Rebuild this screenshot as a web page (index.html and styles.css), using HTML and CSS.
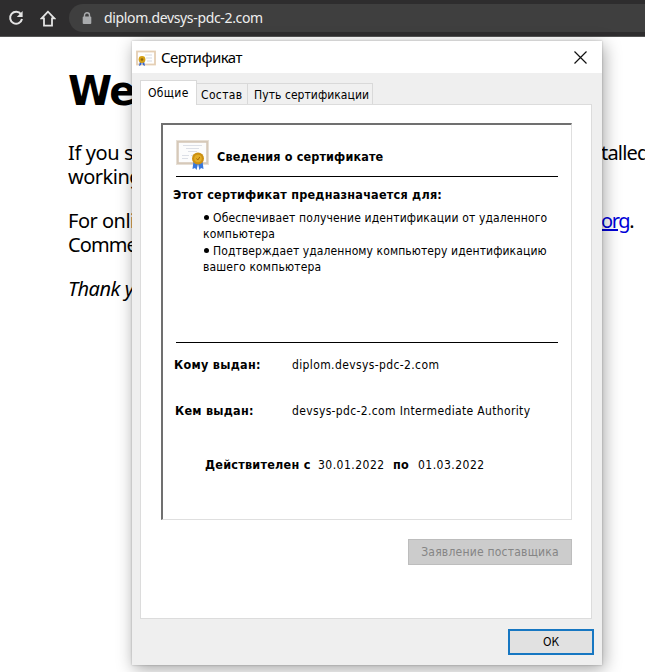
FILE: index.html
```html
<!DOCTYPE html>
<html lang="ru">
<head>
<meta charset="utf-8">
<title>diplom.devsys-pdc-2.com</title>
<link rel="stylesheet" href="styles.css">
</head>
<body>
<header class="toolbar">
  <svg class="nav-icon reload" viewBox="0 0 16 16"><path d="M13 4.2A6 6 0 1 0 14 9" fill="none" stroke="#e4e4e4" stroke-width="2"/><path d="M14.6 1v6H8.8z" fill="#e4e4e4"/></svg>
  <svg class="nav-icon home" viewBox="0 0 16 17"><path d="M8 1.7 1.6 8.4H4V15.6H12V8.4h2.4z" fill="none" stroke="#e4e4e4" stroke-width="1.8"/></svg>
  <div class="omnibox">
    <svg class="lock" viewBox="0 0 10 13"><path d="M2.5 5V3.3a2.5 2.5 0 0 1 5 0V5" fill="none" stroke="#a9abad" stroke-width="1.4"/><rect x="0.7" y="4.6" width="8.6" height="7.4" rx="1" fill="#a9abad"/></svg>
    <span class="url">diplom.devsys-pdc-2.com</span>
  </div>
</header>
<main class="page">
  <div class="left">
    <h1>We</h1>
    <p><span class="line first">If you s</span><span class="line">working</span></p>
    <p><span class="line">For onli</span><span class="line comm">Comme</span></p>
    <p><em>Thank y</em></p>
  </div>
  <div class="right">
    <p>talled</p>
    <p><a>org</a>.</p>
  </div>
</main>
<section class="dialog">
  <div class="titlebar">
    <svg class="cert-small" viewBox="0 0 20 17"><rect x="1" y="1.5" width="18" height="13" fill="#fff" stroke="#e5cfb4" stroke-width="1.8"/><path d="M9 5h7M10 8h6M11 11h5" stroke="#e3e6ed" stroke-width="1.4"/><path d="m4 11-1 5 2-1 1-3 1 3 2 1-1-5z" fill="#3565cf"/><circle cx="6" cy="9.5" r="3.4" fill="#d5a014"/><circle cx="6" cy="9.5" r="1.3" fill="#8c6510"/></svg>
    <span class="title">Сертификат</span>
    <svg class="close" viewBox="0 0 13 13"><path d="M.5 .5l12 12M12.5 .5l-12 12" stroke="#111" stroke-width="1.2"/></svg>
  </div>
  <nav class="tabs"><span class="tab active">Общие</span><span class="tab details">Состав</span><span class="tab path">Путь сертификации</span></nav>
  <div class="panel">
    <div class="info">
      <div class="heading">
        <svg class="cert" viewBox="0 0 33 31"><rect x="1.5" y="2.5" width="30" height="22" fill="#fcfcfc" stroke="#d6c9b9" stroke-width="2.6"/><rect x=".5" y="1.5" width="32" height="24" fill="none" stroke="#e7dfd5"/><path d="M7 6.5h19M10 9.5h13M12 12.5h9M6 16.5h7M6 19.5h6M15 16.5h3" stroke="#dcdfe6"/><path d="m17.5 22-1 8 2.5-1 1.500 2 1.500-6 1.500 6 1.500-2 2.500 1-1-8z" fill="#3978dc"/><circle cx="22" cy="19.500" r="6" fill="#cc9012"/><circle cx="22" cy="19.500" r="3.800" fill="#e3ad27"/><path d="m20.500 19.500 1.300 1.500 2-3" fill="none" stroke="#a86b08"/></svg>
        <h2>Сведения о сертификате</h2>
      </div>
      <h3>Этот сертификат предназначается для:</h3>
      <div class="purposes">
        <div class="p1"><span class="bullet"></span>Обеспечивает получение идентификации от удаленного</div>
        <div class="p2">компьютера</div>
        <div class="p3"><span class="bullet"></span>Подтверждает удаленному компьютеру идентификацию</div>
        <div class="p4">вашего компьютера</div>
      </div>
      <dl class="issued">
        <dt class="to">Кому выдан:</dt><dd class="subject">diplom.devsys-pdc-2.com</dd>
        <dt class="by">Кем выдан:</dt><dd class="issuer">devsys-pdc-2.com Intermediate Authority</dd>
      </dl>
      <div class="validity"><strong class="from">Действителен с</strong><span>30.01.2022</span><strong class="until">по</strong><span>01.03.2022</span></div>
    </div>
    <button class="statement" disabled>Заявление поставщика</button>
  </div>
  <footer><button class="ok">ОК</button></footer>
</section>
</body>
</html>
```
FILE: styles.css
```css
* { box-sizing: border-box; }
body { margin: 0; width: 645px; height: 672px; overflow: hidden; position: relative; background: #fff; color: #000; font-family: "DejaVu Sans Condensed", "DejaVu Sans", sans-serif; font-size: 12px; }
h1, h2, h3, p, dl, dd { margin: 0; }
button { font: inherit; padding: 0; border-radius: 0; }

.toolbar { height: 37px; background: #2e2d2e; display: flex; align-items: flex-start; border-bottom: 1px solid #555; overflow: hidden; }
.nav-icon { flex: none; }
.reload { width: 16px; height: 16px; margin: 10px 0 0 8px; }
.home { width: 16px; height: 17px; margin: 10px 0 0 16px; }
.omnibox { margin: 4px 0 0 13px; flex: 1; height: 28px; border-radius: 14px 0 0 14px; background: #3f3f3f; display: flex; align-items: center; padding-left: 13px; }
.lock { width: 10px; height: 13px; }
.url { margin-left: 12px; color: #eee; font: 14px/20px "Noto Sans", sans-serif; white-space: nowrap; letter-spacing: -0.34px; }

.page { display: grid; grid-template-columns: 66px 43px; column-gap: 467px; padding: 29px 0 0 68px; font: 20px/24px "Noto Sans", sans-serif; white-space: nowrap; }
.page h1 { font: bold 40px/50px "DejaVu Sans", sans-serif; letter-spacing: -1.5px; margin-bottom: 25px; }
.page p { margin-bottom: 20px; letter-spacing: -0.5px; }
.line { display: block; }
.page .first { letter-spacing: -0.4px; }
.page .comm { letter-spacing: -0.9px; }
.page em { letter-spacing: -0.5px; }
.page a { color: #0000d8; text-decoration: underline; }
.right { padding-top: 75px; }
.right p { margin-bottom: 44px; letter-spacing: -0.8px; }
.right p + p { letter-spacing: -1.4px; }

.dialog { position: absolute; left: 132px; top: 41px; width: 470px; height: 624px; background: #efefef; box-shadow: 2px 4px 16px rgba(0,0,0,.36), 0 0 2px rgba(0,0,0,.25); white-space: nowrap; }
.titlebar { height: 32px; background: #fff; display: flex; align-items: center; padding: 0 15px 0 4px; }
.cert-small { width: 20px; height: 17px; margin-top: 2px; }
.title { margin: 0 0 0 5px; font: 15px/20px "Noto Sans", sans-serif; letter-spacing: -0.55px; }
.close { margin-left: auto; width: 13px; height: 13px; }

.tabs { height: 31px; padding-left: 8px; display: flex; align-items: flex-end; position: relative; }
.tab { border: 1px solid #d9d9d9; border-width: 1px 1px 0 0; height: 21px; line-height: 22px; background: #f0f0f0; padding-left: 5px; }
.tab.active { height: 25px; width: 57px; border-left-width: 1px; background: #fff; line-height: 24px; padding-left: 7px; margin-bottom: -1px; letter-spacing: 0.35px; }
.details { width: 51px; padding-left: 4px; letter-spacing: 0.35px; }
.path { width: 125px; padding-left: 6px; letter-spacing: 0.06px; }
.panel { margin-left: 8px; width: 452px; height: 515px; background: #fff; border: 1px solid #dcdcdc; padding: 18px 19px 0 20px; }

.info { width: 411px; height: 397px; border: 2px solid #707070; border-right: 1px solid #dfdfdf; border-bottom: 1px solid #dfdfdf; padding: 14px 13px 0 13px; }
.heading { height: 38px; border-bottom: 1px solid #000; display: flex; }
.cert { width: 33px; height: 31px; }
h2, h3, dt, strong { font-size: 12.5px; font-weight: bold; }
h2 { line-height: 16px; margin: 10px 0 0 8px; letter-spacing: 0.14px; }
h3 { line-height: 16px; margin: 10px 0 0 -3px; letter-spacing: 0.24px; }
.purposes { margin: 7px 0 0 27px; line-height: 16.4px; }
.bullet { display: inline-block; width: 5px; height: 5px; border-radius: 50%; background: #000; margin: 0 4px 2px 1px; }
.p1 { letter-spacing: 0.14px; }
.p2 { letter-spacing: 0.2px; }
.p3 { letter-spacing: 0.1px; }
.p4 { letter-spacing: 0.17px; }
.issued { margin-top: 66px; border-top: 1px solid #000; padding-top: 14px; display: grid; grid-template-columns: 116px 1fr; grid-template-rows: 46px 16px; line-height: 16px; }
.to { margin-left: -2px; letter-spacing: 0.3px; }
.by { margin-left: -1px; letter-spacing: 0.25px; }
.subject { letter-spacing: 0.38px; }
.issuer { letter-spacing: 0.35px; }
.validity { margin: 38px 0 0 29px; line-height: 16px; display: flex; }
.from { width: 113px; letter-spacing: 0.25px; }
.until { width: 25px; margin-left: 8px; letter-spacing: 0.2px; }
.validity span { width: 67px; letter-spacing: 0.48px; }
.statement { display: block; width: 164px; height: 26px; margin: 19px 0 0 auto; background: #ccc; border: 1px solid #bdbdbd; color: #858585; letter-spacing: 0.22px; }
footer { padding: 10px 8px 0 0; display: flex; justify-content: flex-end; }
.ok { width: 86px; height: 26px; border: 2px solid #1777c2; background: #e1e1e1; color: #000; }
```
